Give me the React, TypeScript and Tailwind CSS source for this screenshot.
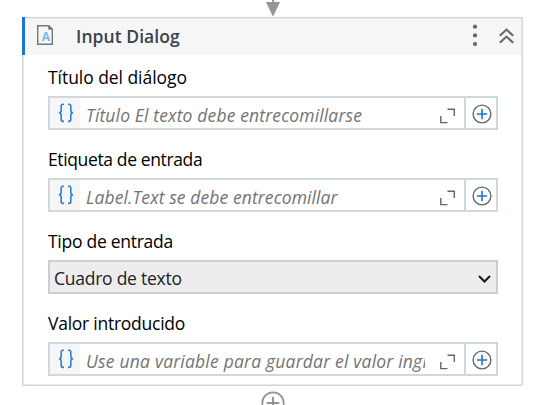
import React from "react";

function ExpandIcon() {
  return (
    <svg width="16" height="16" viewBox="0 0 16 16" fill="none" stroke="#666" strokeWidth="1.4" className="shrink-0">
      <path d="M7.5 1.2H14.3V8M.8 8V14.6H7.5" />
    </svg>
  );
}

function PlusCircle({ ring, plus, size }: { ring: string; plus: string; size: number }) {
  return (
    <svg width={size} height={size} viewBox="0 0 20 20" fill="none" className="shrink-0">
      <circle cx="10" cy="10" r="8.9" stroke={ring} strokeWidth="1.4" />
      <path d="M10 4.8V15.2M4.8 10H15.2" stroke={plus} strokeWidth="1.6" />
    </svg>
  );
}

function Label({ text, spacing }: { text: string; spacing: string }) {
  return <div className={`h-[34px] whitespace-nowrap text-[17.5px] leading-[30px] text-black ${spacing}`}>{text}</div>;
}

function Field({ placeholder, spacing }: { placeholder: string; spacing: string }) {
  return (
    <div className="flex h-[34px] w-[450px] border-2 border-[#cfd8dc] bg-white">
      <div className="flex w-[30px] shrink-0 items-center justify-center bg-[#f6f6f6] pl-px">
        <svg width="16" height="20" viewBox="0 0 16 20" fill="none" stroke="#2b7fd6" strokeWidth="1.6" className="-mt-px">
          <path d="M6 1.2H5Q3.2 1.2 3.2 3V7.5Q3.2 9.5 1 9.7Q3.2 10 3.2 12V16.5Q3.2 18.4 5 18.4H6M10 1.2H11Q12.8 1.2 12.8 3V7.5Q12.8 9.5 15 9.7Q12.8 10 12.8 12V16.5Q12.8 18.4 11 18.4H10" />
        </svg>
      </div>
      <div className={`ml-[6px] w-[339px] shrink-0 overflow-hidden whitespace-nowrap pt-px text-[17.5px] italic leading-[32px] text-[#737373] ${spacing}`}>
        {placeholder}
      </div>
      <div className="flex w-[39px] shrink-0 items-center pl-[15px] pt-[5px]">
        <ExpandIcon />
      </div>
      <div className="flex flex-1 items-center justify-center border-l-2 border-[#cfd8dc] pl-[2px] pt-px">
        <PlusCircle ring="#666" plus="#1976d2" size={20} />
      </div>
    </div>
  );
}

export default function App() {
  return (
    <div className="flex h-[405px] w-[547px] flex-col overflow-hidden bg-white pl-[22px] font-['Open_Sans','Noto_Sans',sans-serif]">
      <div className="h-[17px] shrink-0 pl-[244px]">
        <svg width="14" height="17" viewBox="0 0 14 17" fill="#959595">
          <path d="M6 0H8V2H14L7 16.8L0 2H6Z" />
        </svg>
      </div>
      <div className="h-[369px] w-[501px] shrink-0 border border-[#cfd8dc] bg-white">
        <div className="h-full border border-[#e4eaec]">
          <div className="-ml-[2px] -mt-[2px] flex h-[38px] w-[499px] border-l-[3px] border-[#1976d2]">
            <div className="flex w-full items-center bg-[#f6f6f6] bg-[linear-gradient(to_bottom,#cfd8dc_1px,#e4eaec_1px,#e4eaec_2px,transparent_2px)]">
              <svg width="16" height="20" viewBox="0 0 16 20" fill="none" className="mb-[2px] ml-[12px] shrink-0">
                <path d="M.7.7H11.8L15.3 4.2V19.3H.7Z" stroke="#777" strokeWidth="1.4" />
                <path d="M11.8.7V4.2H15.3Z" fill="#777" stroke="#777" />
                <text x="8.8" y="16" textAnchor="middle" fontFamily="Open Sans" fontSize="12" fontWeight="700" fill="#79bde9">A</text>
              </svg>
              <span className="ml-[23px] whitespace-nowrap text-[17.5px] font-semibold leading-[30px] tracking-[0.06px] text-[#37434d]">Input Dialog</span>
              <svg width="44" height="24" viewBox="0 0 44 24" fill="none" className="mb-[3px] ml-auto mr-[5px] shrink-0">
                <g fill="#666">
                  <circle cx="3" cy="3.7" r="2.1" />
                  <circle cx="3" cy="12.4" r="2.1" />
                  <circle cx="3" cy="21.1" r="2.1" />
                </g>
                <path d="M27.8 12.8L34.5 6.6L41.2 12.8M27.8 19.8L34.5 13.6L41.2 19.8" stroke="#666" strokeWidth="2.1" />
              </svg>
            </div>
          </div>
          <div className="flex flex-col pl-[24px] pt-[7px]">
            <Label text="Título del diálogo" spacing="tracking-[-0.05px]" />
            <Field placeholder="Título El texto debe entrecomillarse" spacing="tracking-[0.15px]" />
            <div className="h-[14px]" />
            <Label text="Etiqueta de entrada" spacing="tracking-[-0.37px]" />
            <Field placeholder="Label.Text se debe entrecomillar" spacing="tracking-[0.1px]" />
            <div className="h-[14px]" />
            <Label text="Tipo de entrada" spacing="tracking-[-0.27px]" />
            <div className="flex h-[34px] w-[450px] items-center justify-between border-2 border-[#cdcdd0] bg-[#ededef] pl-[4px] pr-[5px] text-[17.5px] text-[#222]">
              <span className="whitespace-nowrap pt-[2px] tracking-[-0.25px]">Cuadro de texto</span>
              <svg width="13" height="10" viewBox="0 0 13 10" fill="none" stroke="#151515" strokeWidth="2" className="mt-[3px]">
                <path d="M1 2L6.5 7.5L12 2" />
              </svg>
            </div>
            <div className="h-[14px]" />
            <Label text="Valor introducido" spacing="tracking-[-0.25px]" />
            <Field placeholder="Use una variable para guardar el valor ingresado" spacing="tracking-[0.2px]" />
          </div>
        </div>
      </div>
      <div className="h-[19px] shrink-0 overflow-hidden pl-[239px] pt-[5px]">
        <PlusCircle ring="#929292" plus="#929292" size={24} />
      </div>
    </div>
  );
}
